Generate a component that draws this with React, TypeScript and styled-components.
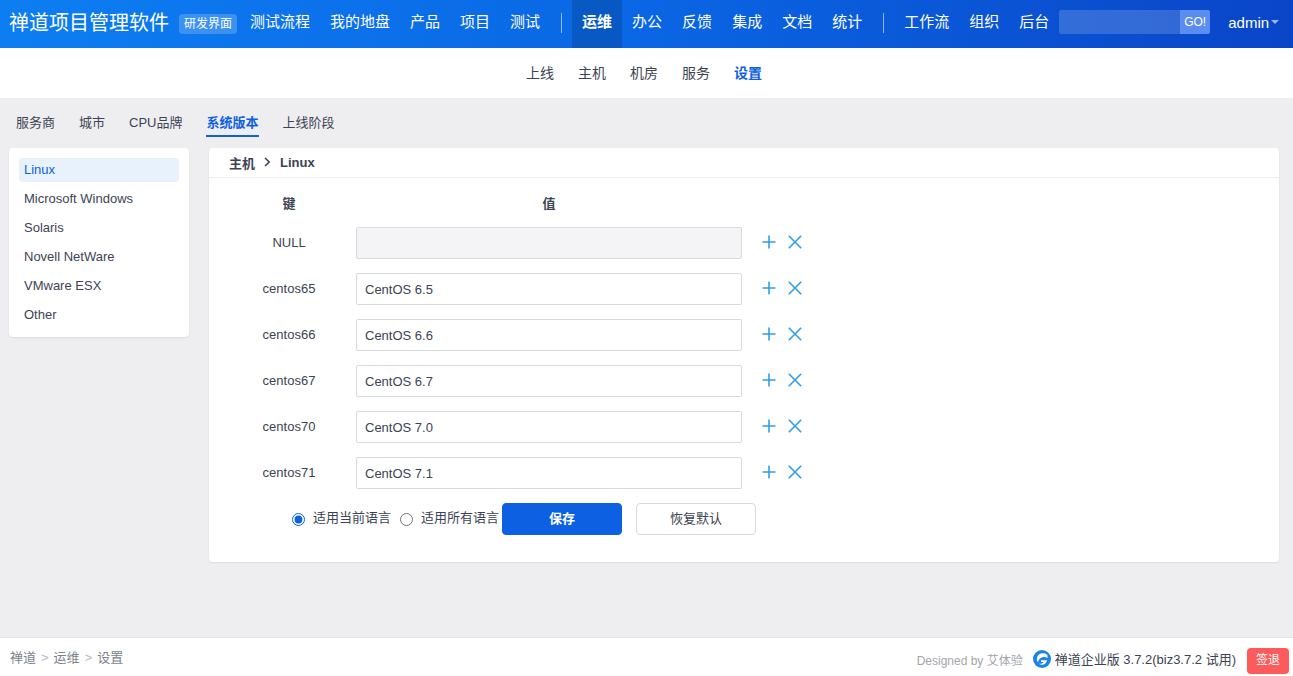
import React from "react";
import styled, { createGlobalStyle } from "styled-components";

const Global = createGlobalStyle`
  html, body { margin: 0; padding: 0; height: 100%; }
  body { font-family: "Liberation Sans", "Noto Sans CJK SC", sans-serif; color: #3c4353; background: #eeeef1; }
  * { box-sizing: border-box; }
`;

const Page = styled.div`
  height: 100vh;
  display: flex;
  flex-direction: column;
  overflow: hidden;
`;
const Header = styled.header`
  height: 48px;
  flex: none;
  display: flex;
  align-items: center;
  padding-left: 10px;
  color: #fff;
  background: linear-gradient(90deg, #0d7ef2 0%, #0a66e4 50%, #0a45c8 100%);
`;
const Title = styled.div`
  font-size: 20px;
  width: 160px;
  white-space: nowrap;
  margin: 0 0 5px -1px;
  padding-right: 0;
`;
const Badge = styled.span`
  margin: 0 3px 0 10px;
  width: 58px;
  height: 20px;
  font-size: 12px;
  line-height: 20px;
  text-align: center;
  border-radius: 4px;
  background: rgba(255, 255, 255, 0.2);
`;
const NavItem = styled.a<{ $active?: boolean }>`
  height: 48px;
  line-height: 44px;
  padding: 0 10px;
  font-size: 15px;
  white-space: nowrap;
  font-weight: ${(p) => (p.$active ? 700 : 400)};
  background: ${(p) => (p.$active ? "rgba(0, 0, 0, 0.14)" : "transparent")};
`;
const NavDivider = styled.span`
  width: 1px;
  height: 20px;
  margin: 0 10px 3px 11px;
  background: rgba(255, 255, 255, 0.55);
`;
const Search = styled.div`
  display: flex;
  height: 24px;
  width: 151px;
  margin-bottom: 4px;
  border-radius: 2px;
  overflow: hidden;
`;
const SearchInput = styled.input`
  width: 121px;
  border: 0;
  padding: 0;
  outline: 0;
  background: rgba(255, 255, 255, 0.17);
`;
const SearchButton = styled.span`
  width: 30px;
  font-size: 12px;
  line-height: 24px;
  text-align: center;
  background: #5b8df0;
`;
const User = styled.div`
  margin: 0 0 4px 18px;
  font-size: 15px;
  display: flex;
  align-items: center;
  gap: 2px;
`;
const Caret = styled.span`
  width: 0;
  height: 0;
  border-left: 4px solid transparent;
  border-right: 4px solid transparent;
  border-top: 4px solid rgba(255, 255, 255, 0.6);
`;
const SubNav = styled.nav`
  height: 50px;
  flex: none;
  background: #fff;
  display: flex;
  justify-content: center;
  align-items: center;
  padding-right: 5px;
  padding-bottom: 3px;
`;
const SubItem = styled.a<{ $active?: boolean }>`
  padding: 0 12px;
  font-size: 14px;
  color: ${(p) => (p.$active ? "#0c60e1" : "#3c4353")};
  font-weight: ${(p) => (p.$active ? 700 : 400)};
`;
const Tabs = styled.div`
  height: 50px;
  flex: none;
  display: flex;
  gap: 24px;
  padding: 16px 0 0 16px;
`;
const Tab = styled.a<{ $active?: boolean }>`
  height: 23px;
  font-size: 13px;
  line-height: 18px;
  color: ${(p) => (p.$active ? "#0c60e1" : "#3c4353")};
  font-weight: ${(p) => (p.$active ? 700 : 400)};
  border-bottom: 2px solid ${(p) => (p.$active ? "#0c60e1" : "transparent")};
`;
const Main = styled.main`
  flex: 1;
  min-height: 0;
  display: flex;
  align-items: flex-start;
  gap: 20px;
  padding: 0 14px 0 9px;
`;
const Sidebar = styled.aside`
  width: 180px;
  flex: none;
  background: #fff;
  border-radius: 4px;
  padding: 10px;
  box-shadow: 0 1px 2px rgba(0, 0, 0, 0.08);
  display: flex;
  flex-direction: column;
  gap: 5px;
`;
const SideItem = styled.a<{ $active?: boolean }>`
  height: 24px;
  line-height: 24px;
  padding: 0 5px;
  font-size: 13px;
  border-radius: 4px;
  white-space: nowrap;
  color: ${(p) => (p.$active ? "#0c60e1" : "#3c4353")};
  background: ${(p) => (p.$active ? "#e8f2fc" : "transparent")};
`;
const Panel = styled.section`
  flex: 1;
  height: 414px;
  background: #fff;
  border-radius: 4px;
  box-shadow: 0 1px 2px rgba(0, 0, 0, 0.08);
`;
const PanelHead = styled.div`
  height: 30px;
  display: flex;
  align-items: center;
  gap: 8px;
  padding: 0 0 1px 20px;
  font-size: 13px;
  font-weight: 700;
  border-bottom: 1px solid #eeeef1;
`;
const Body = styled.div`
  padding-left: 20px;
`;
const Row = styled.div`
  display: grid;
  grid-template-columns: 120px 386px auto;
  column-gap: 7px;
  align-items: center;
  height: 46px;
`;
const HeadRow = styled(Row)`
  height: 42px;
  font-size: 13px;
  font-weight: 700;
  text-align: center;
  padding-top: 6px;
`;
const KeyCell = styled.div`
  font-size: 13px;
  text-align: center;
  padding-bottom: 2px;
`;
const ValueInput = styled.input`
  width: 100%;
  height: 32px;
  padding: 0 8px;
  font: 13px "Liberation Sans", "Noto Sans CJK SC", sans-serif;
  color: #3c4353;
  background: ${(p) => (p.disabled ? "#f4f4f6" : "#fff")};
  border: 1px solid #d8dbde;
  border-radius: 2px;
  outline: 0;
`;
const Actions = styled.div`
  display: flex;
  gap: 10px;
  padding-left: 12px;
  padding-bottom: 2px;
  color: #2f9ee6;
`;
const FormFoot = styled.div`
  display: flex;
  align-items: center;
  height: 32px;
  margin: 7px 0 0 63px;
`;
const RadioLabel = styled.label`
  display: flex;
  align-items: center;
  font-size: 13px;
  line-height: 16px;
  white-space: nowrap;
  margin-right: 9px;
  padding-bottom: 2px;
  &:last-of-type { margin-right: 3px; }
`;
const Radio = styled.input`
  width: 13px;
  height: 13px;
  margin: 3px 8px 0 0;
  accent-color: #0c60e1;
`;
const Button = styled.button<{ $primary?: boolean }>`
  width: 120px;
  height: 32px;
  margin-right: 14px;
  padding: 0 0 3px;
  font: ${(p) => (p.$primary ? 700 : 400)} 13px "Liberation Sans", "Noto Sans CJK SC", sans-serif;
  color: ${(p) => (p.$primary ? "#fff" : "#3c4353")};
  background: ${(p) => (p.$primary ? "#0c60e1" : "#fff")};
  border: 1px solid ${(p) => (p.$primary ? "#0c60e1" : "#d8dbde")};
  border-radius: 4px;
`;
const Footer = styled.footer`
  height: 38px;
  flex: none;
  background: #fff;
  display: flex;
  align-items: center;
  justify-content: space-between;
  padding: 0 4px 0 10px;
  box-shadow: 0 -1px 1px rgba(0, 0, 0, 0.03);
`;
const Crumbs = styled.div`
  display: flex;
  align-items: center;
  gap: 5px;
  font-size: 13px;
  color: #7b7f8c;
  margin-bottom: 2px;
`;
const CrumbSep = styled.span`
  color: #b8bac2;
  padding-top: 3px;
`;
const FootRight = styled.div`
  display: flex;
  align-items: center;
  align-self: stretch;
  padding-top: 4px;
`;
const Designed = styled.span`
  font-size: 12px;
  color: #a3a5ab;
  margin-right: 10px;
`;
const Version = styled.span`
  font-size: 13px;
  margin: 0 11px 2px 4px;
  white-space: nowrap;
`;
const Logout = styled.a`
  width: 42px;
  height: 26px;
  line-height: 25px;
  text-align: center;
  font-size: 12px;
  color: #fff;
  background: #fb5b5b;
  border-radius: 4px;
  margin-top: 4px;
`;

const PlusIcon = () => (
  <svg width="16" height="16" viewBox="0 0 16 16" fill="none" stroke="currentColor" strokeWidth="1.6">
    <path d="M8 1.5v13M1.5 8h13" />
  </svg>
);
const CrossIcon = () => (
  <svg width="16" height="16" viewBox="0 0 16 16" fill="none" stroke="currentColor" strokeWidth="1.6">
    <path d="M1.8 1.8l12.4 12.4M14.2 1.8L1.8 14.2" />
  </svg>
);
const ChevronIcon = () => (
  <svg width="9" height="10" viewBox="0 0 9 10" fill="none" stroke="#3c4353" strokeWidth="1.6">
    <path d="M2 1l4.2 4L2 9" />
  </svg>
);
const Logo = () => (
  <svg width="18" height="18" viewBox="0 0 18 18">
    <circle cx="9" cy="9" r="9" fill="#1a84e8" />
    <path d="M14.5 5.2C12.6 2.8 8.6 2.6 6 4.6 3.6 6.5 3.2 10 5 12.4c.4-2.7 2.4-5 5.2-5.4 1.6-.2 3 .1 4.3.9z" fill="#fff" />
    <path d="M8 10.2h6c-.3 2.6-2.4 4.6-5 4.6-1.2 0-2.3-.4-3.1-1.1 1.5.4 3.6.1 4.8-1.6H8z" fill="#fff" />
  </svg>
);

const navA = ["测试流程", "我的地盘", "产品", "项目", "测试"];
const navB = ["办公", "反馈", "集成", "文档", "统计"];
const navC = ["工作流", "组织", "后台"];
const subs = ["上线", "主机", "机房", "服务"];
const tabs = ["服务商", "城市", "CPU品牌", "系统版本", "上线阶段"];
const sides = ["Linux", "Microsoft Windows", "Solaris", "Novell NetWare", "VMware ESX", "Other"];
const rows = [
  ["NULL", ""],
  ["centos65", "CentOS 6.5"],
  ["centos66", "CentOS 6.6"],
  ["centos67", "CentOS 6.7"],
  ["centos70", "CentOS 7.0"],
  ["centos71", "CentOS 7.1"],
];

export default function App() {
  return (
    <Page>
      <Global />
      <Header>
        <Title>禅道项目管理软件</Title>
        <Badge>研发界面</Badge>
        {navA.map((n) => <NavItem key={n}>{n}</NavItem>)}
        <NavDivider />
        <NavItem $active>运维</NavItem>
        {navB.map((n) => <NavItem key={n}>{n}</NavItem>)}
        <NavDivider />
        {navC.map((n) => <NavItem key={n}>{n}</NavItem>)}
        <Search>
          <SearchInput aria-label="搜索" />
          <SearchButton>GO!</SearchButton>
        </Search>
        <User>admin<Caret /></User>
      </Header>
      <SubNav>
        {subs.map((s) => <SubItem key={s}>{s}</SubItem>)}
        <SubItem $active>设置</SubItem>
      </SubNav>
      <Tabs>
        {tabs.map((t) => <Tab key={t} $active={t === "系统版本"}>{t}</Tab>)}
      </Tabs>
      <Main>
        <Sidebar>
          {sides.map((s) => <SideItem key={s} $active={s === "Linux"}>{s}</SideItem>)}
        </Sidebar>
        <Panel>
          <PanelHead>主机 <ChevronIcon /> Linux</PanelHead>
          <Body>
            <HeadRow><div>键</div><div>值</div><div /></HeadRow>
            {rows.map(([k, v]) => (
              <Row key={k}>
                <KeyCell>{k}</KeyCell>
                <ValueInput value={v} readOnly disabled={k === "NULL"} />
                <Actions><PlusIcon /><CrossIcon /></Actions>
              </Row>
            ))}
            <FormFoot>
              <RadioLabel><Radio type="radio" name="lang" defaultChecked />适用当前语言</RadioLabel>
              <RadioLabel><Radio type="radio" name="lang" />适用所有语言</RadioLabel>
              <Button $primary>保存</Button>
              <Button>恢复默认</Button>
            </FormFoot>
          </Body>
        </Panel>
      </Main>
      <Footer>
        <Crumbs>
          <span>禅道</span><CrumbSep>&gt;</CrumbSep><span>运维</span><CrumbSep>&gt;</CrumbSep><span>设置</span>
        </Crumbs>
        <FootRight>
          <Designed>Designed by 艾体验</Designed>
          <Logo />
          <Version>禅道企业版 3.7.2(biz3.7.2 试用)</Version>
          <Logout>签退</Logout>
        </FootRight>
      </Footer>
    </Page>
  );
}
